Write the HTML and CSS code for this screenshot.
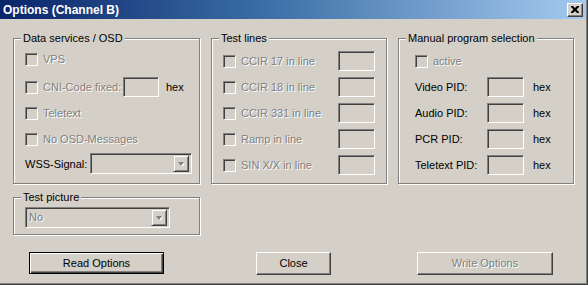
FILE: index.html
```html
<!DOCTYPE html>
<html>
<head>
<meta charset="utf-8">
<link rel="stylesheet" href="styles.css">
</head>
<body>
<div class="window">
  <div class="titlebar">
    <span class="title">Options (Channel B)</span>
    <span class="capbtn"><svg width="8" height="7" viewBox="0 0 8 7"><path d="M0 0h2l2 2 2-2h2v1L5.5 3.5 8 6v1H6L4 5 2 7H0V6l2.5-2.5L0 1z" fill="#000"/></svg></span>
  </div>
  <div class="client">
    <div class="toprow">
      <div class="group g1">
        <span class="legend">Data services / OSD</span>
        <div class="row r-vps"><span class="check"></span><span class="dis">VPS</span></div>
        <div class="row r-cni"><span class="check"></span><span class="dis lbl-cni">CNI-Code fixed:</span><span class="edit e-cni"></span><span class="txt hex1">hex</span></div>
        <div class="row"><span class="check"></span><span class="dis">Teletext</span></div>
        <div class="row"><span class="check"></span><span class="dis">No OSD-Messages</span></div>
        <div class="row r-wss"><span class="txt lbl-wss">WSS-Signal:</span><span class="combo c-wss"><span class="cval"></span><span class="cbtn"><span class="arrow"></span></span></span></div>
      </div>
      <div class="group g2">
        <span class="legend">Test lines</span>
        <div class="row"><span class="check"></span><span class="dis lbl-tl">CCIR 17 in line</span><span class="edit e-tl"></span></div>
        <div class="row"><span class="check"></span><span class="dis lbl-tl">CCIR 18 in line</span><span class="edit e-tl"></span></div>
        <div class="row"><span class="check"></span><span class="dis lbl-tl">CCIR 331 in line</span><span class="edit e-tl"></span></div>
        <div class="row"><span class="check"></span><span class="dis lbl-tl">Ramp in line</span><span class="edit e-tl"></span></div>
        <div class="row"><span class="check"></span><span class="dis lbl-tl">SIN X/X in line</span><span class="edit e-tl"></span></div>
      </div>
      <div class="group g3">
        <span class="legend">Manual program selection</span>
        <div class="row"><span class="check"></span><span class="dis">active</span></div>
        <div class="row"><span class="txt lbl-pid">Video PID:</span><span class="edit e-pid"></span><span class="txt hex">hex</span></div>
        <div class="row"><span class="txt lbl-pid">Audio PID:</span><span class="edit e-pid"></span><span class="txt hex">hex</span></div>
        <div class="row"><span class="txt lbl-pid">PCR PID:</span><span class="edit e-pid"></span><span class="txt hex">hex</span></div>
        <div class="row"><span class="txt lbl-pid">Teletext PID:</span><span class="edit e-pid"></span><span class="txt hex">hex</span></div>
      </div>
    </div>
    <div class="group g4">
      <span class="legend">Test picture</span>
      <span class="combo c-tp"><span class="cval dis">No</span><span class="cbtn"><span class="arrow"></span></span></span>
    </div>
    <div class="buttons">
      <div class="btn default b-read"><span class="inner">Read Options</span></div>
      <div class="btn b-close"><span class="inner">Close</span></div>
      <div class="btn b-write"><span class="inner dis">Write Options</span></div>
    </div>
  </div>
</div>
</body>
</html>
```
FILE: styles.css
```css
* { box-sizing: border-box; }
html, body { margin: 0; padding: 0; background: #D4D0C8; }
body { font-family: "Liberation Sans", Arial, sans-serif; font-size: 11px; color: #000; }

.window {
  width: 588px;
  height: 285px;
  background: #D4D0C8;
  box-shadow: inset -1px -1px 0 #404040, inset -2px -2px 0 #808080;
  overflow: hidden;
}

.titlebar {
  height: 19px;
  margin-right: 2px;
  background: linear-gradient(to right, #0A246A 0%, #3A6EA5 45%, #A6CAF0 100%);
  display: flex;
  align-items: center;
  justify-content: space-between;
  padding: 0 3px 0 3px;
}
.title {
  color: #fff;
  font-weight: bold;
  font-size: 12px;
  line-height: 14px;
}
.capbtn {
  width: 16px;
  height: 14px;
  background: #D4D0C8;
  border: 1px solid;
  border-color: #fff #404040 #404040 #fff;
  box-shadow: inset -1px -1px 0 #808080;
  display: flex;
  align-items: center;
  justify-content: center;
  padding-bottom: 1px;
}

.client { padding: 19px 0 0 13px; }

.toprow { display: flex; height: 146px; }

.group {
  position: relative;
  border: 1px solid #808080;
  box-shadow: inset 1px 1px 0 #fff, 1px 1px 0 #fff;
}
.legend {
  position: absolute;
  top: -7px;
  left: 7px;
  padding: 0 2px;
  background: #D4D0C8;
  line-height: 13px;
  white-space: nowrap;
}

.g1 { width: 187px; height: 146px; padding: 10px 0 0 11px; }
.g2 { width: 176px; height: 146px; margin-left: 11px; padding: 12px 0 0 11px; }
.g3 { width: 176px; height: 146px; margin-left: 11px; padding: 12px 0 0 16px; }

.row {
  display: flex;
  align-items: center;
  height: 20px;
  margin-bottom: 6px;
  white-space: nowrap;
}
.g1 .r-vps { margin-bottom: 8px; }
.g1 .row:nth-of-type(4) { margin-bottom: 4px; }
.g1 .r-wss { height: 21px; }

.check {
  flex: none;
  width: 13px;
  height: 13px;
  margin-right: 5px;
  border: 1px solid;
  border-color: #808080 #fff #fff #808080;
  box-shadow: inset 1px 1px 0 #404040, inset -1px -1px 0 #D4D0C8;
  background: #D4D0C8;
}

.dis { color: #808080; text-shadow: 1px 1px 0 #fff; }
.txt { color: #000; }

.edit {
  flex: none;
  height: 20px;
  border: 1px solid;
  border-color: #808080 #fff #fff #808080;
  box-shadow: inset 1px 1px 0 #404040, inset -1px -1px 0 #D4D0C8;
  background: #D4D0C8;
}

.lbl-cni { width: 80px; }
.e-cni { width: 36px; }
.hex1 { margin-left: 7px; }

.lbl-wss { width: 65px; }

.lbl-tl { width: 97px; }
.e-tl { width: 37px; }

.lbl-pid { width: 72px; }
.e-pid { width: 37px; }
.hex { margin-left: 9px; }

.combo {
  flex: none;
  display: flex;
  height: 21px;
  border: 1px solid;
  border-color: #808080 #fff #fff #808080;
  box-shadow: inset 1px 1px 0 #404040, inset -1px -1px 0 #D4D0C8;
  background: #D4D0C8;
  padding: 2px;
}
.c-wss { width: 102px; }
.c-tp { width: 145px; }
.cval { flex: 1; line-height: 15px; padding-left: 1px; }
.cbtn {
  width: 16px;
  height: 17px;
  margin: -1px 0 0 0;
  border: 1px solid;
  border-color: #D4D0C8 #404040 #404040 #D4D0C8;
  box-shadow: inset 1px 1px 0 #fff, inset -1px -1px 0 #808080;
  display: flex;
  align-items: center;
  justify-content: center;
}
.arrow {
  width: 0;
  height: 0;
  border-left: 3.5px solid transparent;
  border-right: 3.5px solid transparent;
  border-top: 4px solid #808080;
  filter: drop-shadow(1px 1px 0 #fff);
  margin-top: 1px;
}

.g4 {
  width: 187px;
  height: 38px;
  margin-top: 13px;
  padding: 9px 0 0 11px;
}

.buttons {
  display: flex;
  margin-top: 17px;
  padding-left: 16px;
}
.btn {
  height: 23px;
  background: #D4D0C8;
  border: 1px solid;
  border-color: #fff #404040 #404040 #fff;
  box-shadow: inset -1px -1px 0 #808080;
  display: flex;
  align-items: center;
  justify-content: center;
}
.btn .inner { line-height: 13px; }
.btn.default {
  border: 1px solid #000;
  box-shadow: inset 1px 1px 0 #fff, inset -1px -1px 0 #404040, inset -2px -2px 0 #808080;
}
.b-read { width: 135px; height: 22px; }
.b-close { width: 75px; margin-left: 92px; }
.b-write { width: 136px; margin-left: 86px; }
```
